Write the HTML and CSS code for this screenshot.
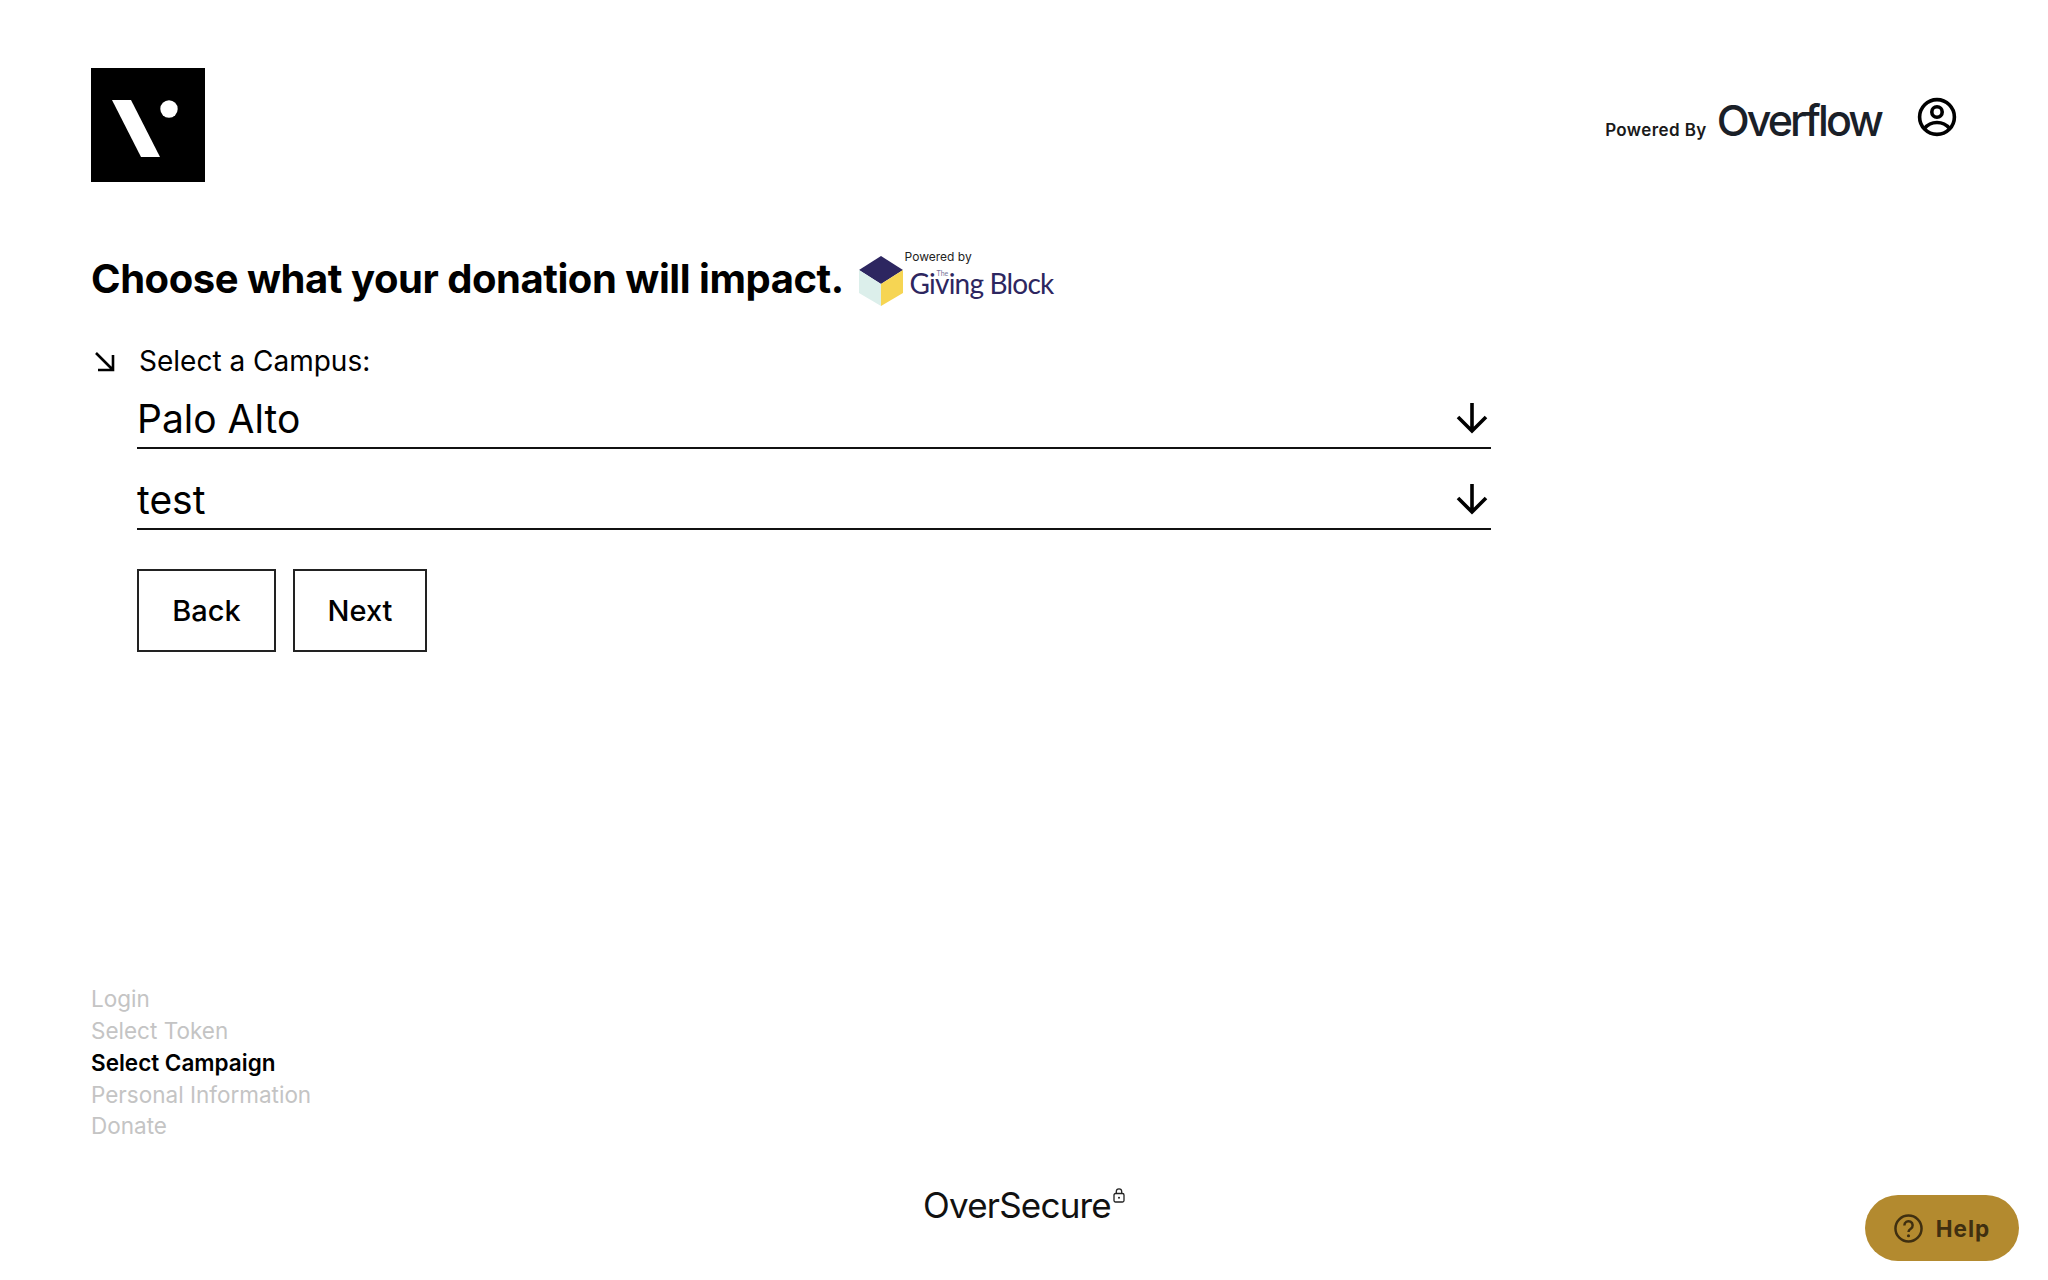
FILE: index.html
```html
<!DOCTYPE html>
<html lang="en">
<head>
    <meta charset="UTF-8" />
    <title>Overflow - Donate</title>
    <link rel="stylesheet" href="styles.css">
</head>
<body>

<header class="top-bar">
    <svg class="logo" viewBox="0 0 114 114">
        <rect width="114" height="114" fill="#000"/>
        <path d="M21 32h19l29 57H50z" fill="#fff"/>
        <circle cx="78" cy="41" r="8.7" fill="#fff"/>
    </svg>
    <div class="powered">
        <span class="powered-label">Powered By</span>
        <span class="overflow-logo">Overflow</span>
        <svg class="user-icon" viewBox="0 0 40 40" fill="none" stroke="#000" stroke-width="3.600">
            <circle cx="20" cy="20" r="17.400"/>
            <circle cx="20" cy="15" r="5.200"/>
            <path d="M7.500 31.500C11 27 15 25.500 20 25.500s9 1.500 12.500 6"/>
        </svg>
    </div>
</header>

<main class="content">
    <div class="title-row">
        <h1>Choose what your donation will impact.</h1>
        <div class="giving-block">
            <svg class="cube" viewBox="0 0 44 50">
                <path d="M22 0l22 14-22 14L0 14z" fill="#2d2660"/>
                <path d="M0 14l22 14v22L0 37z" fill="#dcefeb"/>
                <path d="M44 14L22 28v22l22-13z" fill="#f6d553"/>
            </svg>
            <div class="giving-text">
                <span class="giving-powered">Powered by</span>
                <span class="giving-name"><small>The</small>Giving Block</span>
            </div>
        </div>
    </div>

    <div class="campus-label">
        <svg class="corner-arrow" viewBox="0 0 22 22" fill="none" stroke="#000" stroke-width="2.600">
            <path d="M2 3l17 17M19 5v15H4"/>
        </svg>
        <span>Select a Campus:</span>
    </div>

    <div class="form-body">
        <div class="select-field">
            <span>Palo Alto</span>
            <svg class="down-arrow" viewBox="0 0 32 32" fill="none" stroke="#000" stroke-width="3.600">
                <path d="M16 1v28M2 15l14 14 14-14"/>
            </svg>
        </div>
        <div class="select-field">
            <span>test</span>
            <svg class="down-arrow" viewBox="0 0 32 32" fill="none" stroke="#000" stroke-width="3.600">
                <path d="M16 1v28M2 15l14 14 14-14"/>
            </svg>
        </div>
        <div class="buttons">
            <button class="btn btn-back">Back</button>
            <button class="btn btn-next">Next</button>
        </div>
    </div>
</main>

<ul class="steps">
    <li>Login</li>
    <li>Select Token</li>
    <li class="active">Select Campaign</li>
    <li>Personal Information</li>
    <li>Donate</li>
</ul>

<footer class="secure">
    <span>OverSecure</span>
    <svg class="lock" viewBox="0 0 12 15" fill="none" stroke="#222" stroke-width="1.300">
        <rect x="1" y="5.500" width="10" height="8.500" rx="1.500"/>
        <path d="M3.300 5.500V3.500a2.700 2.700 0 0 1 5.400 0v2"/>
        <circle cx="6" cy="9.800" r="1" fill="#222" stroke="none"/>
    </svg>
</footer>

<button class="help">
    <svg class="help-icon" viewBox="0 0 28 28" fill="none" stroke="#3f2f10" stroke-width="2.400">
        <circle cx="14" cy="14" r="12.600"/>
        <path d="M10 11a4 4 0 1 1 6.200 3.300c-1.400.9-2.200 1.500-2.200 3"/>
        <circle cx="14" cy="21" r="1.500" fill="#3f2f10" stroke="none"/>
    </svg>
    Help
</button>

</body>
</html>
```

FILE: styles.css
```css
:root {
    --text: #000;
    --muted: #c4c4c4;
    --gold: #b38a2f;
    --gold-dark: #3f2f10;
    --navy: #2d2660;
}

* {
    box-sizing: border-box;
    margin: 0;
    padding: 0;
}

html, body {
    height: 100%;
}

body {
    display: flex;
    flex-direction: column;
    font-family: 'Inter', sans-serif;
    color: var(--text);
    background: #fff;
    padding: 68px 0 0 91px;
    position: relative;
    overflow: hidden;
}

/* Top bar */
.top-bar {
    display: flex;
    justify-content: space-between;
    align-items: flex-start;
    padding-right: 91px;
}

.logo {
    width: 114px;
    height: 114px;
    display: block;
}

.powered {
    display: flex;
    align-items: center;
    margin-top: 30px;
}

.powered-label {
    font-size: 17px;
    font-weight: 600;
    color: #1a1a1a;
    letter-spacing: 0.4px;
    margin-top: 20px;
}

.overflow-logo {
    font-size: 43px;
    font-weight: 450;
    letter-spacing: -2.900px;
    color: #1a2028;
    margin-left: 10px;
    line-height: 44px;
}

.user-icon {
    width: 40px;
    height: 40px;
    margin-left: 36px;
    margin-top: -6px;
}

/* Titolo */
.content {
    flex: 1;
}

.title-row {
    display: flex;
    align-items: center;
    margin-top: 61px;
    height: 70px;
}

h1 {
    font-size: 40px;
    font-weight: 700;
    letter-spacing: -0.460px;
    white-space: nowrap;
}

.giving-block {
    display: flex;
    align-items: center;
    margin-left: 15px;
}

.cube {
    width: 44px;
    height: 50px;
    margin-top: 6px;
}

.giving-text {
    display: flex;
    flex-direction: column;
    margin-left: 7px;
    padding-bottom: 9px;
}

.giving-powered {
    font-size: 12px;
    line-height: 16px;
    color: #222;
    margin-bottom: 2px;
    margin-left: -5px;
}

.giving-name {
    position: relative;
    font-family: 'Lato', sans-serif;
    font-size: 28px;
    line-height: 32px;
    letter-spacing: -0.800px;
    color: var(--navy);
    white-space: nowrap;
}

.giving-name small {
    position: absolute;
    left: 27px;
    top: 2px;
    font-size: 7px;
    line-height: 8px;
    letter-spacing: 0;
    color: #77739a;
}

/* Form */
.campus-label {
    display: flex;
    align-items: center;
    margin-top: 30px;
    font-size: 28px;
    line-height: 36px;
}

.corner-arrow {
    width: 22px;
    height: 22px;
    margin: 0 23px 0 3px;
}

.form-body {
    padding-left: 46px;
    width: 1400px;
}

.select-field {
    display: flex;
    justify-content: space-between;
    align-items: center;
    height: 81px;
    padding: 21px 3px 0 0;
    border-bottom: 2px solid #111;
    font-size: 39px;
}

.select-field:first-child {
    height: 70px;
    padding-top: 10px;
}

.down-arrow {
    width: 32px;
    height: 32px;
}

.buttons {
    display: flex;
    gap: 17px;
    margin-top: 39px;
}

.btn {
    height: 83px;
    background: #fff;
    border: 2px solid #222;
    font-family: inherit;
    font-size: 29px;
    font-weight: 500;
    color: var(--text);
}

.btn-back {
    width: 139px;
}

.btn-next {
    width: 134px;
}

/* Passi */
.steps {
    list-style: none;
    font-size: 22.500px;
    line-height: 31.700px;
    color: var(--muted);
}

.steps .active {
    color: var(--text);
    font-weight: 600;
}

.secure {
    display: flex;
    justify-content: center;
    align-items: flex-start;
    margin: 41px 0 0 -91px;
    height: 97px;
    font-size: 35px;
    line-height: 44px;
    letter-spacing: -0.800px;
    color: #111;
}

.lock {
    width: 12px;
    height: 15px;
    margin: 5px 0 0 2px;
}

/* Bottone aiuto */
.help {
    position: absolute;
    right: 29px;
    bottom: 19px;
    width: 154px;
    height: 66px;
    border: none;
    border-radius: 33px;
    background: var(--gold);
    color: var(--gold-dark);
    font-family: inherit;
    font-size: 22.500px;
    font-weight: 700;
    letter-spacing: 1px;
    display: flex;
    align-items: center;
    justify-content: center;
    gap: 13px;
}

.help-icon {
    width: 29px;
    height: 29px;
}
```
